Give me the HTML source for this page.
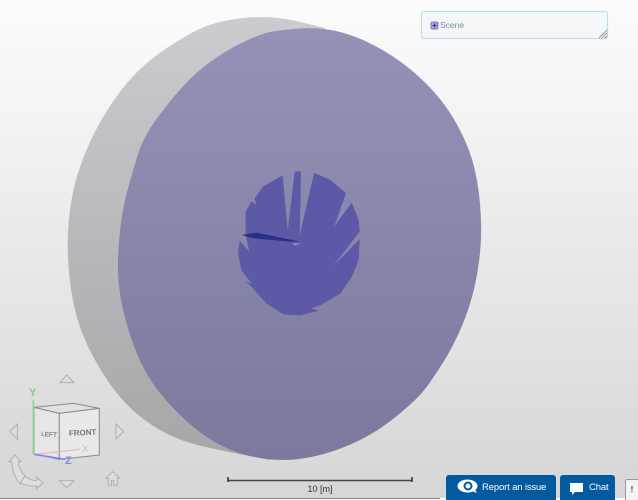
<!DOCTYPE html>
<html><head><meta charset="utf-8"><style>
html,body{margin:0;padding:0;width:638px;height:500px;overflow:hidden;background:#fff;font-family:"Liberation Sans",sans-serif}
#v{position:absolute;left:0;top:0;width:638px;height:498px;background:linear-gradient(#fcfcfc,#d6d6d6)}
svg{position:absolute;left:0;top:0}
.scene{position:absolute;left:421px;top:11px;width:185px;height:26px;border:1px solid #bcdcee;border-radius:3px;background:#f5f6f7;box-shadow:0 0 1px #cfe6f2}
.scene span{position:absolute;left:18px;top:8px;font-size:8.5px;color:#6f8fa3;line-height:11px}
.btn{position:absolute;top:475px;height:25px;background:#035a9e;border-radius:3px 3px 0 0;color:#fff;font-size:9.5px;line-height:25px;letter-spacing:-.15px}
.t10{position:absolute;left:288px;top:483px;width:64px;text-align:center;font-size:9px;line-height:12px;color:#333}
.ex{position:absolute;left:625px;top:479px;width:13px;height:21px;background:#f4f4f4;border:1px solid #999;border-right:0;border-bottom:0;box-sizing:border-box;border-radius:2px 0 0 0;font-size:8px;line-height:20px;text-align:center;color:#333;font-weight:bold}
</style></head><body>
<div id="v"></div>
<svg width="638" height="500" viewBox="0 0 638 500">
<defs>
<linearGradient id="g" gradientUnits="userSpaceOnUse" x1="0" y1="17" x2="0" y2="460"><stop offset="0" stop-color="#cbcbd0"/><stop offset="1" stop-color="#a6a6a8"/></linearGradient>
<linearGradient id="f" gradientUnits="userSpaceOnUse" x1="0" y1="27" x2="0" y2="460"><stop offset="0" stop-color="#9592b8"/><stop offset="1" stop-color="#7b799d"/></linearGradient>
</defs>
<path fill="url(#g)" d="M325,28 L300,22 Q280,17 262.500,17 Q245,17 226.500,20.500 Q208,24 191.500,33 Q175,42 159,53.500 Q143,65 130.500,79 Q118,93 106.500,111.500 Q95,130 86.500,150 Q78,170 73.500,190 Q69,210 68,232.500 Q67,255 69.500,277.500 Q72,300 77,317.500 Q82,335 91,352.500 Q100,370 111.500,386 Q123,402 136.500,413.500 Q150,425 166.500,433.500 Q183,442 208,447.500 Q233,453 270,460 L300,300Z"/>
<path fill="url(#f)" d="M300,28.500 Q280,30 270,32 Q260,34 242.500,42.500 Q225,51 210,62 Q195,73 181.500,88 Q168,103 155.500,120.500 Q143,138 138,154 Q133,170 127.500,190 Q122,210 119.500,236 Q117,262 118.500,281 Q120,300 126,321.500 Q132,343 140,360.500 Q148,378 160,393 Q172,408 187,421.500 Q202,435 217.500,443.500 Q233,452 250,456 Q267,460 283.500,460 Q300,460 320,455 Q340,450 360,440 Q380,430 398,415 Q416,400 423,391.500 Q430,383 441.500,365 Q453,347 461.500,327 Q470,307 474.500,287 Q479,267 480.500,247 Q482,227 480,203.500 Q478,180 472.500,161 Q467,142 455,121 Q443,100 424,81.500 Q405,63 382.500,50 Q360,37 340,32 Q320,27 300,28.500Z"/>
<g transform="translate(220 160) scale(.3333)">
<polygon fill="#5c5aa6" stroke="#5c5aa6" stroke-width="2" points="187,48 203,222 225,35 242,35 238,235 283,40 330,60 377,100 340,205 395,130 415,180 418,215 410,225 325,335 418,240 415,300 395,350 360,400 300,435 270,445 295,452 240,465 190,462 140,430 100,385 80,365 100,375 65,330 55,280 60,245 90,278 78,225 78,180 78,155 95,125 110,138 105,115 130,80"/>
<polygon fill="#2c2f88" points="65,225 110,218 240,245 210,245 100,235"/>
<polygon fill="#8f9cc8" points="215,250 245,250 225,256"/>
</g>
<!-- nav cube -->
<g transform="translate(0 370) scale(.3333)" fill="none" stroke="#b0b0b0" stroke-width="3">
<polygon points="180,38 200,15 222,38" fill="#dedede"/>
<polygon points="52,162 30,185 52,207" fill="#dedede"/>
<polygon points="348,162 370,185 348,207" fill="#dedede"/>
<polygon points="178,332 222,332 200,353" fill="#dedede"/>
<polygon points="102,112 220,100 298,115 178,130" fill="#e2e2e2" stroke="#8a8a8a"/>
<polygon points="102,112 178,130 178,268 102,252" fill="#e6e6e6" stroke="#8a8a8a"/>
<polygon points="178,130 298,115 298,255 178,268" fill="#e9e9e9" stroke="#8a8a8a"/>
<path d="M103 253L240 238" stroke="#e4b4b4" stroke-width="3"/>
<path d="M100 90V252" stroke="#8fd68f" stroke-width="5"/>
<path d="M103 253L195 268" stroke="#8484ee" stroke-width="5"/>
<path d="M318 325L338 305 360 325H352V346H342V332H334V346H325V325Z" fill="#dedede"/>
<path d="M45 255L27 275H36C36 300 45 325 60 340L75 318C62 305 55 290 55 275H63Z" fill="#dedede"/>
<path d="M60 340C75 345 95 350 110 348V356L129 338 110 322V332C95 332 85 328 75 318Z" fill="#dedede"/>
</g>
<g font-family="'Liberation Sans',sans-serif">
<text x="29" y="396" font-size="11" font-weight="bold" fill="#7fd07f">Y</text>
<text x="65" y="464" font-size="11" font-weight="bold" fill="#8484ee">Z</text>
<text x="82" y="452" font-size="10" fill="#e8baba">X</text>
<text x="41" y="436" font-size="6.500" fill="#555" transform="rotate(4 41 436)">LEFT</text>
<text x="69" y="436" font-size="8" font-weight="bold" fill="#777" transform="rotate(-3 69 436)">FRONT</text>
</g>
<!-- scale -->
<path d="M228 480.500H412" stroke="#444" stroke-width="1.500"/>
<path d="M228 477V482M412 477V482" stroke="#333" stroke-width="1.500"/>
<path d="M0 498.500H440" stroke="#888" stroke-width="1"/>
</svg>
<div class="scene"><span>Scene</span>
<svg width="10" height="10" style="left:8px;top:9px"><rect x="1" y="1" width="7" height="7" rx="1.500" fill="#a7a7dd" stroke="#7a7ac0"/><path d="M2.500 4.500H6.500M4.500 2.500V6.500" stroke="#33338a"/></svg>
<svg width="10" height="10" style="left:176px;top:17px"><path d="M9 1L1 9M9 4L4 9M9 7L7 9" stroke="#999"/></svg>
</div>
<div class="t10">10 [m]</div>
<div class="btn" style="left:446px;width:110px"><span style="position:absolute;left:36px;white-space:nowrap">Report an issue</span>
<svg width="22" height="16" style="left:11px;top:4px"><ellipse cx="10.500" cy="7" rx="10" ry="6.500" fill="#fff"/><path d="M15 12L20 14 17 9Z" fill="#fff"/><circle cx="11" cy="7" r="3.500" fill="none" stroke="#035a9e" stroke-width="2"/></svg>
</div>
<div class="btn" style="left:560px;width:55px"><span style="position:absolute;left:29px">Chat</span>
<svg width="16" height="14" style="left:9px;top:7px"><path d="M1 1H14V10H6L3 13V10H1Z" fill="#fff"/></svg>
</div>
<div class="ex">!</div>
</body></html>
